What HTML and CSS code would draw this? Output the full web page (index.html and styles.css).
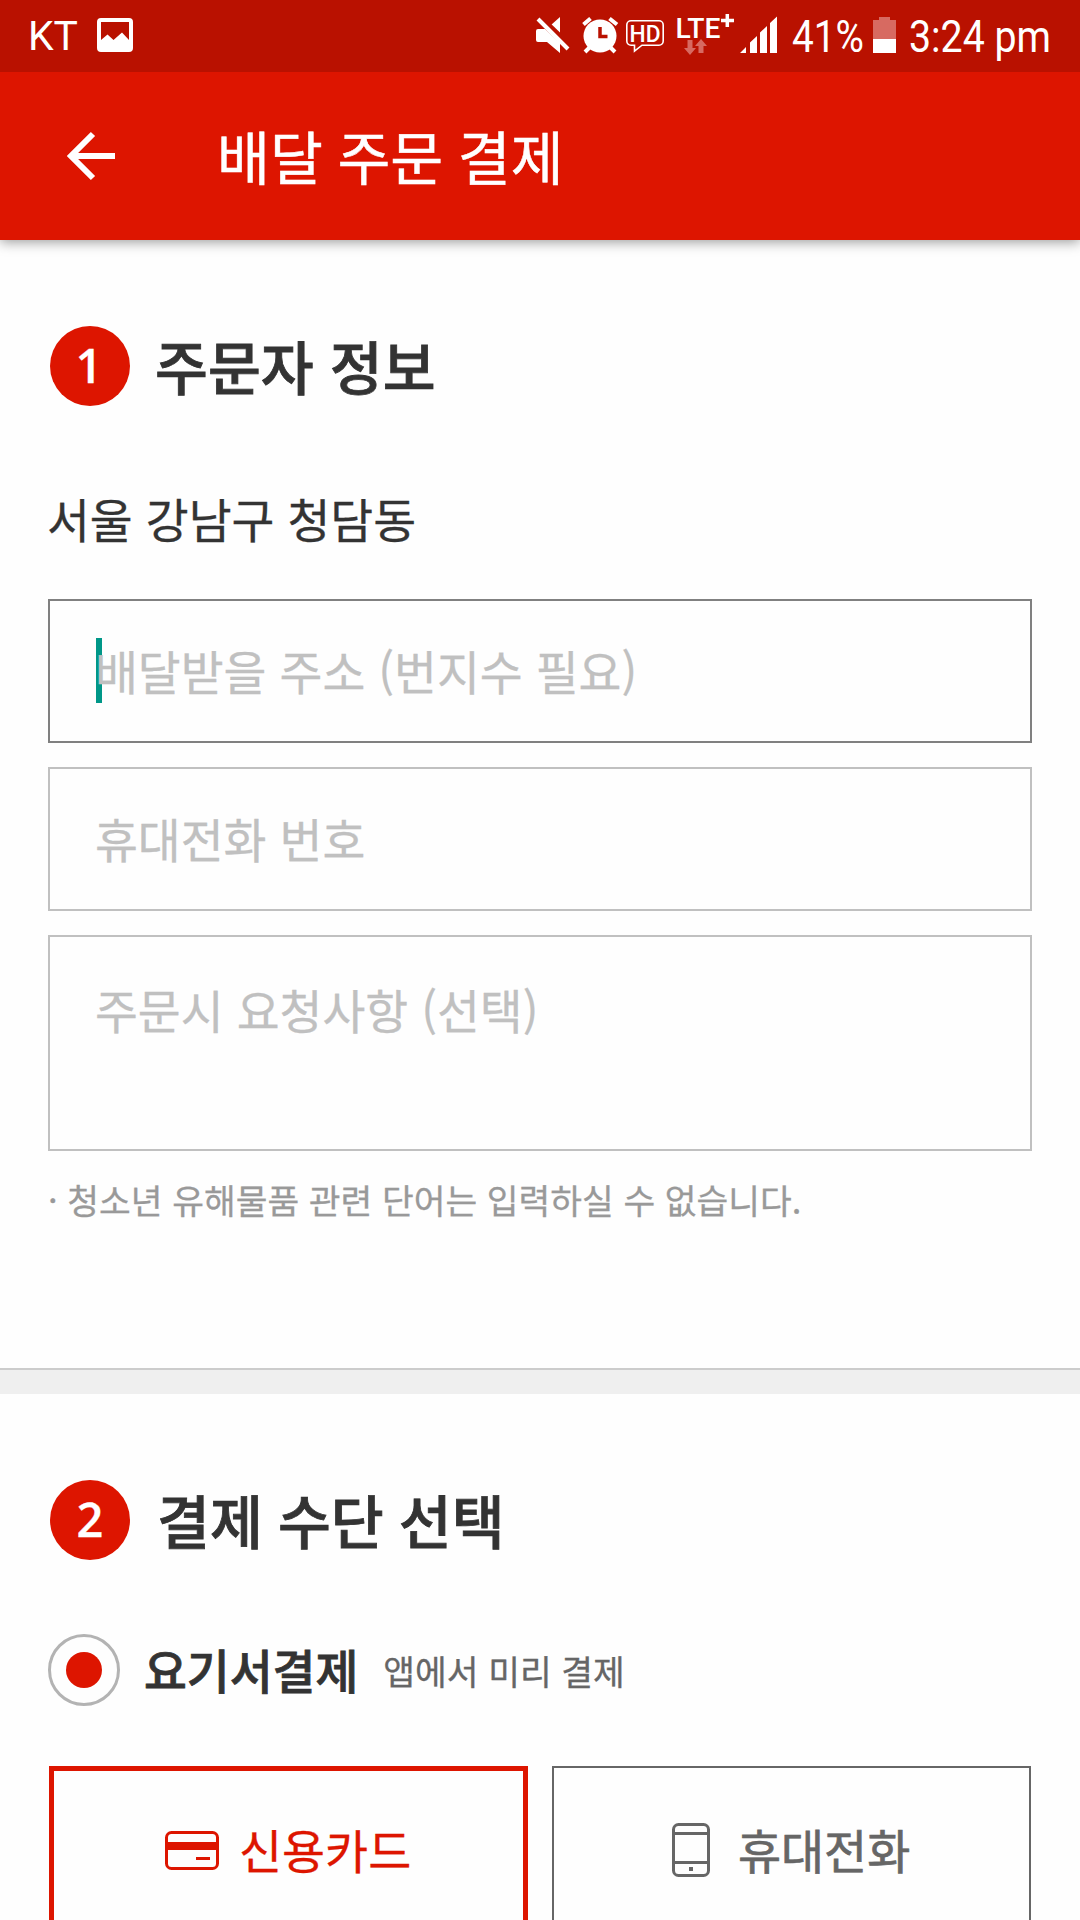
FILE: index.html
```html
<!DOCTYPE html>
<html lang="ko">
<head>
<meta charset="utf-8">
<title>배달 주문 결제</title>
<link rel="stylesheet" href="styles.css">
</head>
<body>
<div class="status-bar">
  <svg class="status-item" width="47" height="72" viewBox="31 0 47 72"><text class="carrier" x="28" y="49.500" textLength="50" lengthAdjust="spacingAndGlyphs">KT</text></svg>
  <svg class="status-item gap-picture" width="36" height="72" viewBox="97 0 36 72"><path fill="#fff" fill-rule="evenodd" d="M101 18h28a4 4 0 0 1 4 4v26a4 4 0 0 1-4 4h-28a4 4 0 0 1-4-4V22a4 4 0 0 1 4-4zM101 22v18l6.500-5.500 6 5.500 8.500-7.500 7 7.500V22z"/></svg>
  <div class="status-right">
    <svg class="status-item" width="33" height="72" viewBox="536 0 33 72"><path fill="#fff" d="M536 31a2 2 0 0 1 2-2h7l15 14v10l-13-11h-9a2 2 0 0 1-2-2zM551 25l9-8v17z"/><path stroke="#b91100" stroke-width="4" d="M541 17l30 29"/><path stroke="#fff" stroke-width="4" d="M538 19l30 30"/></svg>
    <svg class="status-item gap-alarm" width="36" height="72" viewBox="582 0 36 72"><circle cx="600" cy="36" r="16.500" fill="#fff"/><path stroke="#fff" stroke-width="4" d="M583.500 24.500l7-6M609.500 18.500l7.500 6M590 47l-5 5M610 47l5 5"/><path fill="none" stroke="#b91100" stroke-width="3.500" d="M600 27v9.500h7.500"/></svg>
    <svg class="status-item gap-hd" width="38" height="72" viewBox="626 0 38 72"><path fill="none" stroke="#fff" stroke-width="1.600" d="M631 20.800h28a4.200 4.200 0 0 1 4.200 4.200v16a4.200 4.200 0 0 1-4.200 4.200h-17l-7.500 6v-6H631a4.200 4.200 0 0 1-4.200-4.200V25a4.200 4.200 0 0 1 4.200-4.200z"/><text class="hd" x="629.500" y="41.500" textLength="31" lengthAdjust="spacingAndGlyphs">HD</text></svg>
    <svg class="status-item gap-lte" width="58" height="72" viewBox="676 0 58 72"><text class="lte" x="675.500" y="38" textLength="45" lengthAdjust="spacingAndGlyphs">LTE</text><path stroke="#fff" stroke-width="3.500" d="M721 20.500h13M727.300 14v13"/><path fill="#d76a61" d="M687.500 40h5v8h3.500l-6 7-6-7h3.500zM698.500 53h5v-7h3.500l-6-7-6 7h3.500z"/></svg>
    <svg class="status-item gap-signal" width="37" height="72" viewBox="740 0 37 72"><path fill="#fff" d="M740 53l6-6v6zM750 53V42.500l7-6.500v17zM760 53V32.500l7-6.500v27zM770 53V23l7-6.500V53z"/></svg>
    <svg class="status-item gap-percent" width="71" height="72" viewBox="793 0 71 72"><text class="status-text" x="792" y="52" textLength="72" lengthAdjust="spacingAndGlyphs">41%</text></svg>
    <svg class="status-item gap-battery" width="23" height="72" viewBox="873 0 23 72"><path fill="#d76a61" d="M879 17h11v3h6v19h-23V20h6z"/><path fill="#fff" d="M873 39h23v14h-23z"/></svg>
    <svg class="status-item gap-time" width="140" height="72" viewBox="910 0 140 72"><text class="status-text" x="909" y="52" textLength="142" lengthAdjust="spacingAndGlyphs">3:24 pm</text></svg>
  </div>
</div>
<header class="app-bar">
  <svg class="back" width="48" height="48" viewBox="0 0 48 48"><path fill="none" stroke="#fff" stroke-width="6" d="M48 24H5M26 2L4 24l22 22"/></svg>
  <h1 class="app-title">배달 주문 결제</h1>
</header>
<main>
  <section class="orderer">
    <div class="section-head"><span class="step step-one">1</span><h2 class="section-title">주문자 정보</h2></div>
    <p class="district">서울 강남구 청담동</p>
    <div class="fields">
      <div class="field focused"><span class="caret"></span><span class="hint">배달받을 주소 (번지수 필요)</span></div>
      <div class="field"><span class="hint">휴대전화 번호</span></div>
      <div class="field memo"><span class="hint">주문시 요청사항 (선택)</span></div>
    </div>
    <p class="notice">· 청소년 유해물품 관련 단어는 입력하실 수 없습니다.</p>
  </section>
  <div class="divider"></div>
  <section class="payment">
    <div class="section-head"><span class="step">2</span><h2 class="section-title title-two">결제 수단 선택</h2></div>
    <div class="option"><span class="radio"></span><span class="option-name">요기서결제</span><span class="option-note">앱에서 미리 결제</span></div>
    <div class="methods">
      <div class="method selected">
        <svg width="54" height="39" viewBox="0 0 54 39"><rect x="1.500" y="1.500" width="51" height="36" rx="5" fill="none" stroke="#dd1500" stroke-width="3"/><path fill="#dd1500" d="M2 11h50v8H2zM31 26h14v3H31z"/></svg>
        <span>신용카드</span>
      </div>
      <div class="method phone">
        <svg width="38" height="54" viewBox="0 0 38 54"><rect x="1.500" y="1.500" width="35" height="51" rx="5" fill="none" stroke="#666" stroke-width="3"/><path fill="#666" d="M2 9h34v3H2zM2 38h34v3H2zM17 44h4v4h-4z"/></svg>
        <span>휴대전화</span>
      </div>
    </div>
  </section>
</main>
</body>
</html>
```
FILE: styles.css
```css
* { box-sizing: border-box; }
body {
  margin: 0;
  width: 1080px;
  height: 1920px;
  overflow: hidden;
  background: #fefefe;
  color: #333;
  font-family: "Noto Sans CJK KR", sans-serif;
  -webkit-text-stroke: .3px currentColor;
}
h1, h2, p { margin: 0; font-weight: 400; }
svg { display: block; flex: none; overflow: visible; }
span, h1, h2, p { white-space: nowrap; }

.status-bar {
  position: relative;
  z-index: 1;
  display: flex;
  height: 72px;
  padding: 0 30px 0 31px;
  background: #b91100;
  -webkit-text-stroke: 0;
}
.status-right { display: flex; margin-left: auto; }
.gap-picture { margin-left: 19px; }
.gap-alarm { margin-left: 13px; }
.gap-hd { margin-left: 8px; }
.gap-lte { margin-left: 12px; }
.gap-signal { margin-left: 6px; }
.gap-percent { margin-left: 16px; }
.gap-battery { margin-left: 9px; }
.gap-time { margin-left: 14px; }
.carrier { font: 400 41px Roboto, sans-serif; fill: #fff; }
.status-text { font: 400 45px Roboto, sans-serif; fill: #fff; }
.hd { font: 500 23px Roboto, sans-serif; fill: #fff; }
.lte { font: 500 27px Roboto, sans-serif; fill: #fff; }

.app-bar {
  display: flex;
  align-items: center;
  height: 168px;
  padding-left: 67px;
  background: #dd1500;
  box-shadow: 0 2px 12px rgba(0, 0, 0, .4);
}
.app-title {
  margin: 0 0 3px 102px;
  color: #fff;
  font-size: 57.500px;
  line-height: 84px;
  word-spacing: -1.500px;
  -webkit-text-stroke-width: .5px;
}

.orderer { height: 1128px; padding: 86px 48px 0; }
.section-head { display: flex; align-items: center; height: 80px; padding-left: 2px; }
.step {
  width: 80px;
  height: 80px;
  border-radius: 50%;
  background: #dd1500;
  color: #fff;
  font-family: "Open Sans", sans-serif;
  font-size: 47px;
  font-weight: 600;
  line-height: 78px;
  text-align: center;
}
.step-one { padding-right: 2px; }
.section-title {
  margin: 0 0 3px 25px;
  font-size: 57.500px;
  font-weight: 500;
  line-height: 80px;
  -webkit-text-stroke-width: .8px;
}
.title-two { margin-left: 27px; word-spacing: -1px; }
.district { margin: 77px 0 0 -1px; font-size: 46.600px; line-height: 70px; }
.fields { display: flex; flex-direction: column; gap: 24px; margin-top: 46px; }
.field {
  position: relative;
  height: 144px;
  padding: 34px 45px;
  border: 2px solid #c0c0c0;
  color: #c0c0c0;
  font-size: 46.600px;
  line-height: 70px;
}
.focused { border-color: #808080; }
.memo { height: 216px; padding-top: 37px; }
.hint { position: relative; }
.caret {
  position: absolute;
  left: 46px;
  top: 37px;
  width: 6px;
  height: 65px;
  background: #009788;
}
.notice { margin-top: 22px; color: #999; font-size: 34.500px; line-height: 52px; }

.divider { height: 26px; border-top: 2px solid #ccc; background: #efefef; }

.payment { padding: 86px 48px 0; }
.option { display: flex; align-items: center; height: 72px; margin-top: 74px; }
.radio {
  display: flex;
  align-items: center;
  justify-content: center;
  width: 72px;
  height: 72px;
  border: 3px solid #b3b3b3;
  border-radius: 50%;
}
.radio::before {
  content: "";
  width: 36px;
  height: 36px;
  border-radius: 50%;
  background: #dd1500;
}
.option-name { margin: 0 0 3px 24px; font-size: 46.600px; font-weight: 500; line-height: 70px; -webkit-text-stroke-width: .8px; }
.option-note { margin: 0 0 1px 25px; color: #666; font-size: 34.500px; line-height: 52px; }
.methods {
  display: grid;
  grid-template-columns: 479px 479px;
  gap: 24px;
  margin-top: 60px;
  padding-left: 1px;
}
.method {
  display: flex;
  align-items: center;
  height: 168px;
  padding-left: 118px;
  border: 2px solid #666;
  color: #666;
  font-size: 46.800px;
  line-height: 70px;
  -webkit-text-stroke-width: .7px;
}
.method span { margin: 0 0 3px 28px; }
.selected {
  padding-left: 111px;
  border: 5px solid #dd1500;
  color: #dd1500;
  -webkit-text-stroke-width: .3px;
}
.selected span { margin-left: 20px; }
```
